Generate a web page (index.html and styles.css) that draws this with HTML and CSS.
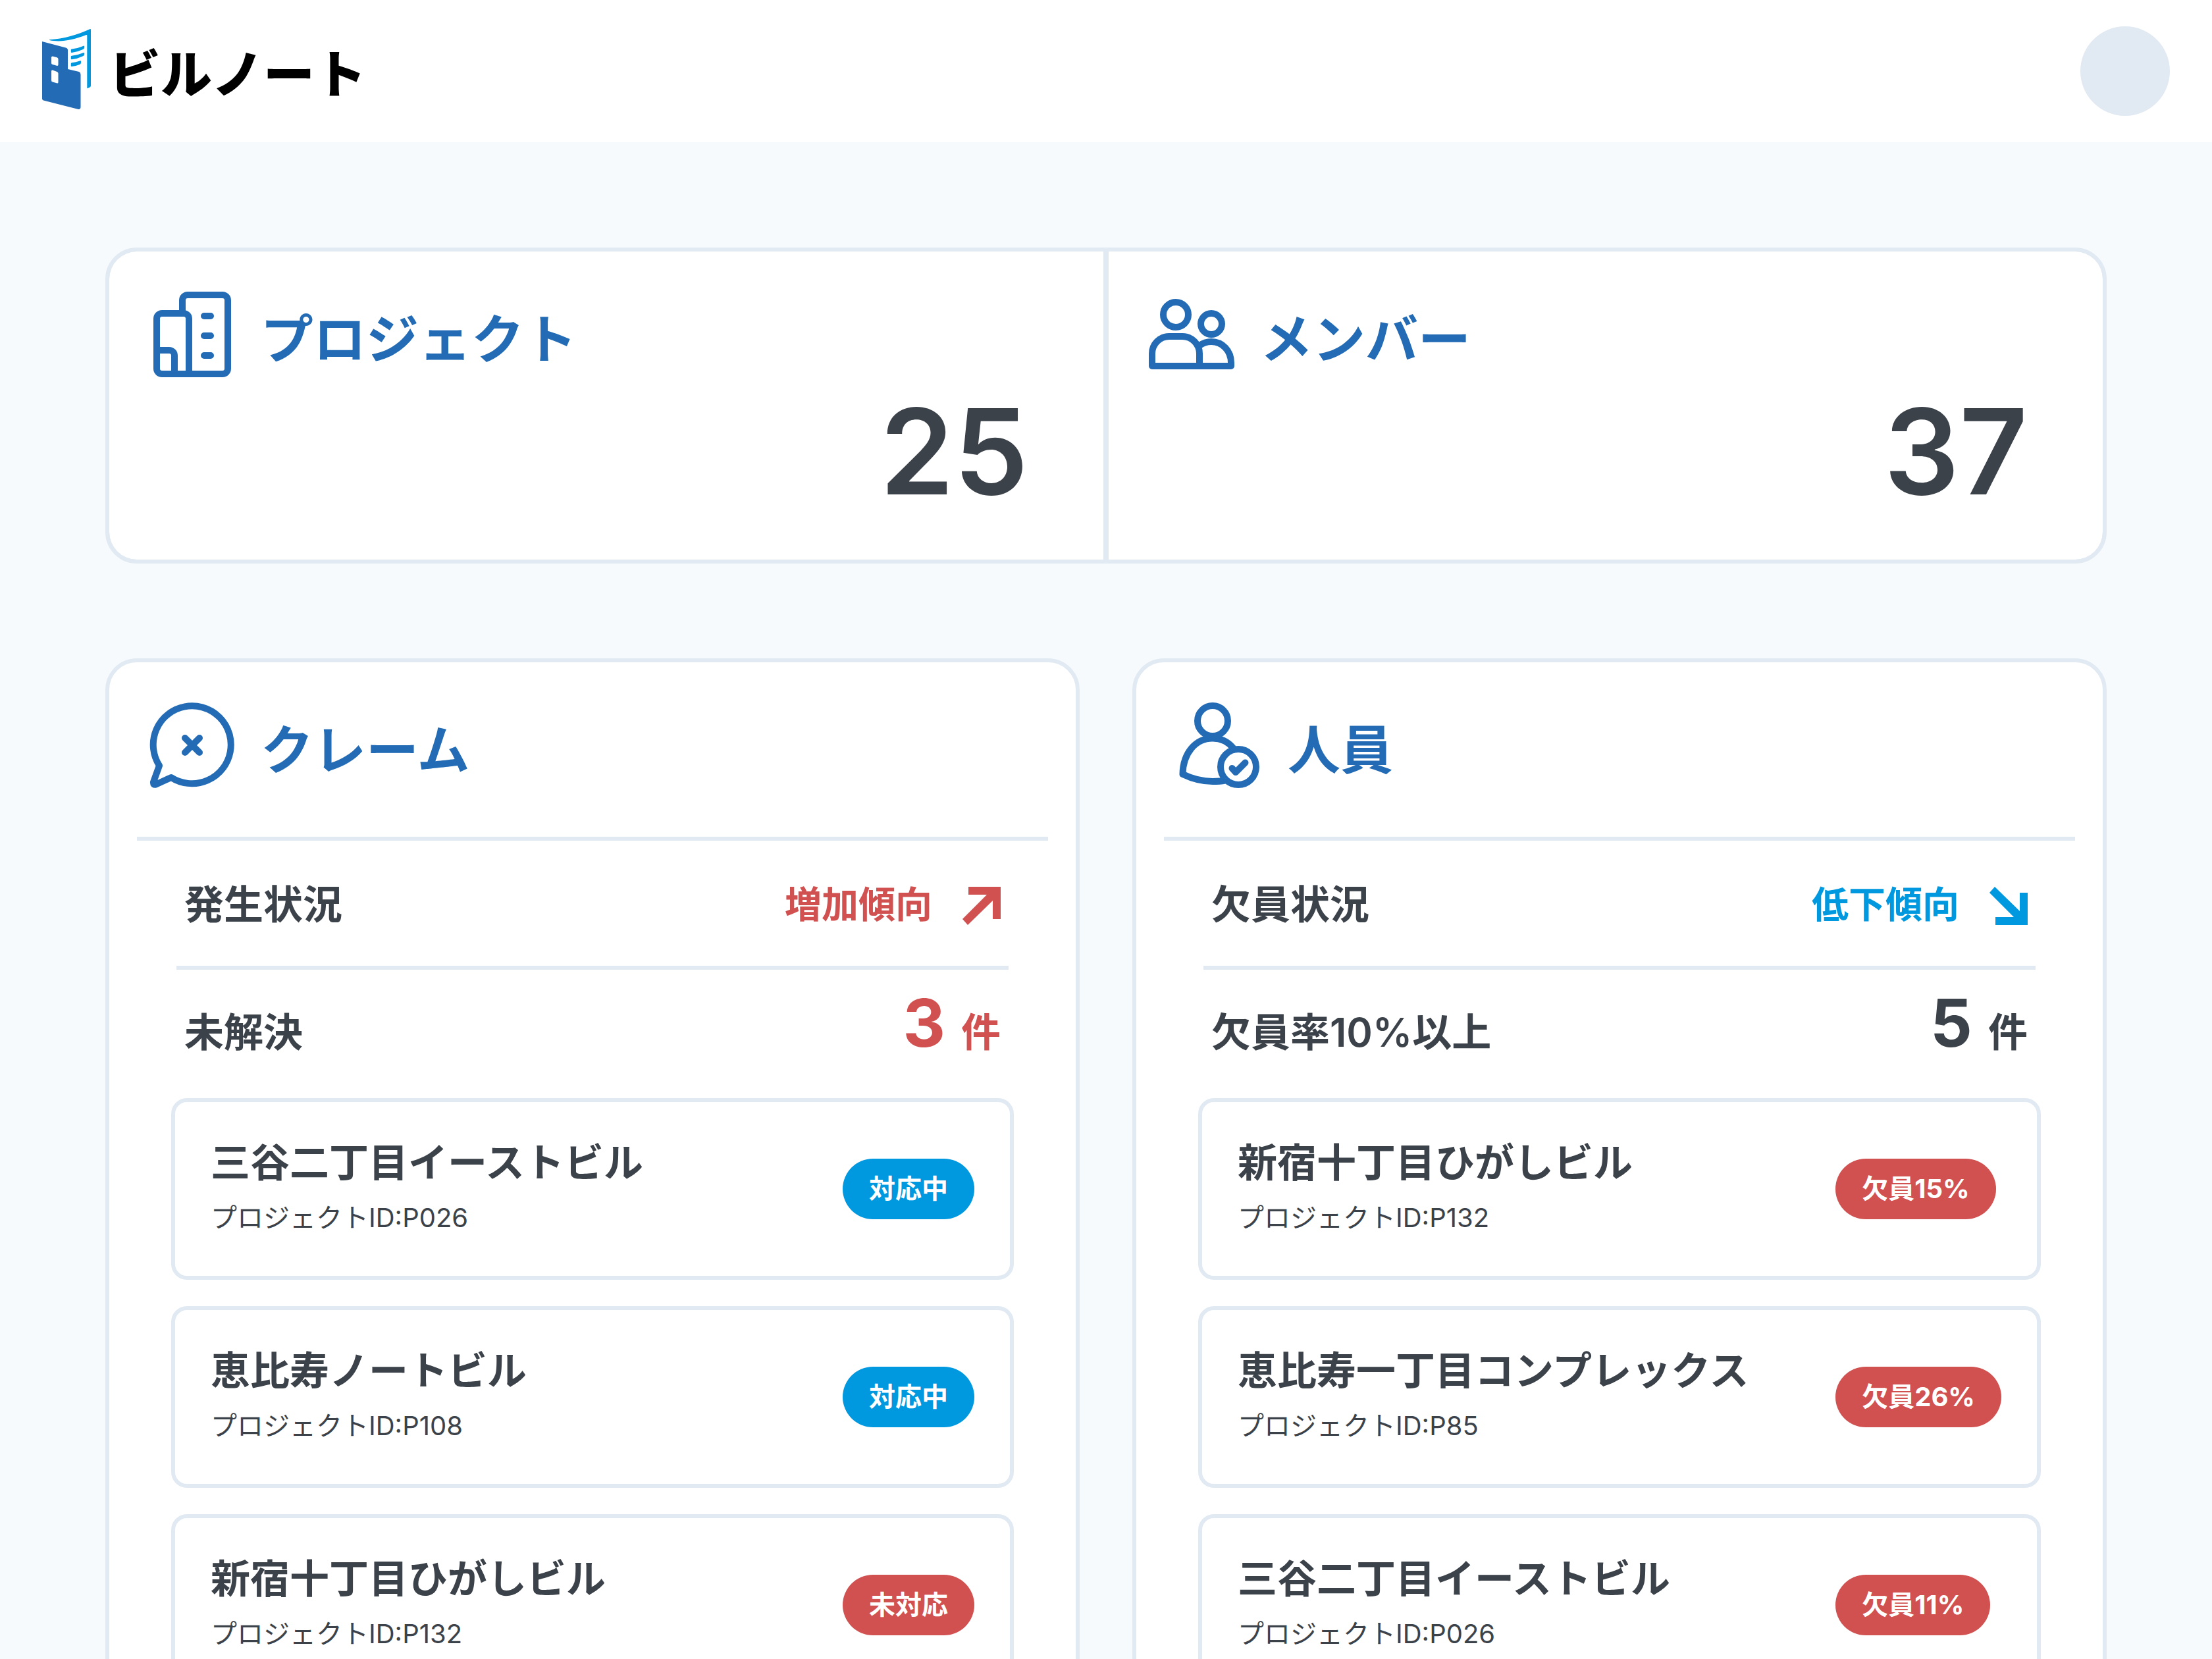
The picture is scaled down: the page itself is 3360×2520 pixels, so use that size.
FILE: index.html
```html
<!DOCTYPE html>
<html lang="ja">
<head>
<meta charset="utf-8">
<meta name="viewport" content="width=device-width, initial-scale=1">
<title>ビルノート</title>
<link rel="stylesheet" href="styles.css">
</head>
<body>
<header class="header">
  <a class="brand" href="#">
    <svg class="brand-mark" viewBox="0 0 74 128" aria-hidden="true">
      <path class="mark-cover" fill-rule="evenodd" d="M0 19 L36 28.500 Q39 29.500 39 32 V61 L56 65 Q58.500 66 58.500 69 V119 Q58 122.500 55 122 L2 108.500 Q0 107.500 0 106 Z M16 41.500 Q14 41.500 14 43 V52 Q14 53.500 16 54 L23 56 Q24.500 56 24.500 54 V46 Q24.500 44 22.500 43.300 Z M16 62.500 Q14 62 14 64 V78 Q14 80 16 80.500 L23 82.500 Q24.500 82.500 24.500 81 V67.500 Q24.500 65.500 22.500 65 Z"/>
      <path class="mark-page" d="M11 16.300 C33 15 53 9 73 0 Q74 0 74 1 V86 Q74 87.500 72.500 88.500 L69 90.300 Q68.300 90.300 68.300 89.500 V10 Q68.300 8.500 67 9 C45 17.500 27 20.500 11 17 Z"/>
      <path class="mark-page" d="M43.800 31.500 Q43.800 30.500 45 30.500 Q54 29.500 63 25.700 Q64.200 25.300 64.200 26.500 V28.500 Q64 30 62 31 Q54 35 45 36 Q43.800 36 43.800 35 Z M43.800 41.800 Q43.800 40.800 45 40.800 Q54 39.800 63 36 Q64.200 35.600 64.200 36.800 V38.800 Q64 40.300 62 41.300 Q54 45.300 45 46.300 Q43.800 46.300 43.800 45.300 Z M43.800 52.500 Q43.800 51.500 45 51.300 Q51 50.700 58 48.300 Q59 48 59 49 V51.500 Q58.800 53 57 54 Q51 56.500 45 57 Q43.800 57 43.800 56 Z"/>
    </svg>
    <span class="brand-name">ビルノート</span>
  </a>
  <button class="avatar" type="button" aria-label="アカウント"></button>
</header>

<main class="main">
  <section class="summary">
    <div class="stat">
      <div class="heading">
        <svg class="icon" viewBox="0 0 144 144" aria-hidden="true">
          <path d="M57 40 V20 a8 8 0 0 1 8-8 H118 a8 8 0 0 1 8 8 V124 a8 8 0 0 1-8 8 H26 a8 8 0 0 1-8-8 V48 a8 8 0 0 1 8-8 H59 a8 8 0 0 1 8 8 V132 M18 96 H37 a8 8 0 0 1 8 8 V132 M90 44 H100 M90 74 H100 M90 104 H100"/>
        </svg>
        <h2>プロジェクト</h2>
      </div>
      <p class="stat-value">25</p>
    </div>
    <div class="stat">
      <div class="heading">
        <svg class="icon" viewBox="0 0 144 144" aria-hidden="true">
          <circle cx="48" cy="42" r="19"/>
          <circle cx="102" cy="56" r="16"/>
          <path d="M12 120 V101 a26 26 0 0 1 26-26 H58 a26 26 0 0 1 26 26 V120 M84 89 Q92 83 102 83 C119 83 132 97 132 115 V120 H12"/>
        </svg>
        <h2>メンバー</h2>
      </div>
      <p class="stat-value">37</p>
    </div>
  </section>

  <div class="panels">
    <section class="panel">
      <div class="heading">
        <svg class="icon" viewBox="0 0 144 144" aria-hidden="true">
          <path d="M40 121 A59 59 0 1 0 22 103 L13 128 Q12.500 133 17 131.500 Z M61 61 L83 83 M83 61 L61 83"/>
        </svg>
        <h2>クレーム</h2>
      </div>
      <div class="panel-body">
        <div class="row row-trend">
          <h3>発生状況</h3>
          <p class="trend trend-up">増加傾向
            <svg class="arrow" viewBox="0 -6 58 74" aria-hidden="true"><path d="M9 9 H58 V58 H46 V30 L8 67 L0 58 L37 21 H9 Z"/></svg>
          </p>
        </div>
        <div class="row row-count">
          <h3>未解決</h3>
          <p class="count count-alert"><span class="count-value">3</span>件</p>
        </div>
        <ul class="list">
          <li class="item">
            <div class="item-text"><h4>三谷二丁目イーストビル</h4><p class="item-id">プロジェクトID:P026</p></div>
            <span class="pill pill-progress">対応中</span>
          </li>
          <li class="item">
            <div class="item-text"><h4>恵比寿ノートビル</h4><p class="item-id">プロジェクトID:P108</p></div>
            <span class="pill pill-progress">対応中</span>
          </li>
          <li class="item">
            <div class="item-text"><h4>新宿十丁目ひがしビル</h4><p class="item-id">プロジェクトID:P132</p></div>
            <span class="pill pill-alert">未対応</span>
          </li>
        </ul>
      </div>
    </section>

    <section class="panel">
      <div class="heading">
        <svg class="icon" viewBox="0 0 144 144" aria-hidden="true">
          <circle cx="62" cy="35" r="23"/>
          <path d="M93 76 C85 66.500 74 61.500 62 61.500 C36 61.500 17 84 16.500 116 C30 122.500 45 127 62 127 C69 127 76 126.500 81 125.500"/>
          <circle cx="101" cy="105" r="27"/>
          <path d="M91.500 107 L97 113 L111.500 98.500"/>
        </svg>
        <h2>人員</h2>
      </div>
      <div class="panel-body">
        <div class="row row-trend">
          <h3>欠員状況</h3>
          <p class="trend trend-down">低下傾向
            <svg class="arrow" viewBox="0 -6 58 74" aria-hidden="true"><path d="M8 9 L46 46 V18 H58 V67 H9 V55 H37 L0 18 Z"/></svg>
          </p>
        </div>
        <div class="row row-count">
          <h3>欠員率10%以上</h3>
          <p class="count"><span class="count-value">5</span>件</p>
        </div>
        <ul class="list">
          <li class="item">
            <div class="item-text"><h4>新宿十丁目ひがしビル</h4><p class="item-id">プロジェクトID:P132</p></div>
            <span class="pill pill-alert">欠員15%</span>
          </li>
          <li class="item">
            <div class="item-text"><h4>恵比寿一丁目コンプレックス</h4><p class="item-id">プロジェクトID:P85</p></div>
            <span class="pill pill-alert">欠員26%</span>
          </li>
          <li class="item">
            <div class="item-text"><h4>三谷二丁目イーストビル</h4><p class="item-id">プロジェクトID:P026</p></div>
            <span class="pill pill-alert">欠員11%</span>
          </li>
        </ul>
      </div>
    </section>
  </div>
</main>
</body>
</html>
```
FILE: styles.css
```css
:root {
  --blue: #236cb5;
  --sky: #0098df;
  --red: #d15050;
  --text: #3c424a;
  --line: #e1eaf2;
  --ground: #f6fafd;
}

* {
  box-sizing: border-box;
  margin: 0;
  padding: 0;
}

body {
  display: flex;
  flex-direction: column;
  height: 100vh;
  background: var(--ground);
  color: var(--text);
  font-family: Inter, "Noto Sans CJK JP", sans-serif;
  font-optical-sizing: none;
  font-size: 60px;
  font-weight: 600;
}

h2, h3, h4 {
  font-size: inherit;
  font-weight: inherit;
}

/* Header */

.header {
  display: flex;
  flex: none;
  align-items: center;
  justify-content: space-between;
  padding: 40px 64px;
  background: #fff;
}

.brand {
  display: flex;
  align-items: center;
  gap: 28px;
  color: #000;
  text-decoration: none;
}

.brand-mark {
  width: 74px;
  height: 128px;
}

.mark-cover {
  fill: var(--blue);
}

.mark-page {
  fill: var(--sky);
}

.brand-name {
  padding-top: 12px;
  font-size: 78px;
  font-weight: 900;
  line-height: 124px;
}

.avatar {
  width: 136px;
  height: 136px;
  border: 0;
  border-radius: 50%;
  background: var(--line);
}

/* Page */

.main {
  display: flex;
  flex: 1;
  flex-direction: column;
  gap: 144px;
  min-height: 0;
  padding: 160px;
  overflow-y: auto;
  scrollbar-width: none;
}

.heading {
  display: flex;
  align-items: flex-start;
  gap: 32px;
  color: var(--blue);
}

.heading h2 {
  font-size: 80px;
  line-height: 158px;
}

.icon {
  flex: none;
  width: 144px;
  height: 144px;
  fill: none;
  stroke: currentColor;
  stroke-width: 10px;
  stroke-linecap: round;
  stroke-linejoin: round;
}

/* Totals */

.summary {
  display: grid;
  flex: none;
  grid-template-columns: 1fr 1fr;
  gap: 8px;
  border: 6px solid var(--line);
  border-radius: 48px;
  background: var(--line);
  overflow: hidden;
}

.stat {
  padding: 54px 54px 72px;
  background: #fff;
}

.stat:first-child {
  border-radius: 42px 0 0 42px;
}

.stat:last-child {
  border-radius: 0 42px 42px 0;
}

.stat-value {
  padding-right: 60px;
  font-size: 180px;
  line-height: 184px;
  text-align: right;
}

/* Panels */

.panels {
  display: grid;
  flex: none;
  grid-template-columns: 1fr 1fr;
  gap: 80px;
}

.panel {
  padding: 0 42px 54px;
  border: 6px solid var(--line);
  border-radius: 48px;
  background: #fff;
}

.panel > .heading {
  padding: 54px 12px 53px;
  border-bottom: 6px solid var(--line);
}

.panel-body {
  padding: 0 52px;
}

.row {
  display: flex;
  justify-content: space-between;
  margin: 0 8px;
  padding: 0 12px;
}

.row-trend {
  align-items: center;
  height: 196px;
  padding-bottom: 6px;
  border-bottom: 6px solid var(--line);
}

.row-count {
  align-items: baseline;
  padding-top: 31px;
  padding-bottom: 50px;
  line-height: 100px;
}

.trend {
  display: flex;
  align-items: center;
  gap: 46px;
  font-size: 56px;
  font-weight: 700;
}

.trend-up {
  color: var(--red);
}

.trend-down {
  color: var(--sky);
}

.arrow {
  width: 58px;
  height: 74px;
  fill: currentColor;
}

.count {
  display: flex;
  align-items: baseline;
  gap: 24px;
}

.count-alert {
  color: var(--red);
}

.count-value {
  font-size: 100px;
  font-weight: 700;
}

/* Project list: all badges of a list share one column */

.list {
  display: grid;
  grid-template-columns: 1fr auto;
  gap: 40px;
  list-style: none;
}

.item {
  display: grid;
  grid-column: 1 / -1;
  grid-template-columns: subgrid;
  align-items: center;
  justify-items: start;
  padding: 46px 54px;
  border: 6px solid var(--line);
  border-radius: 24px;
}

.item-text {
  padding-top: 4px;
}

.item h4 {
  line-height: 84px;
}

.item-id {
  font-size: 40px;
  font-weight: 400;
  line-height: 84px;
}

.pill {
  padding: 0 40px;
  border-radius: 46px;
  color: #fff;
  font-size: 40px;
  font-weight: 700;
  line-height: 92px;
}

.pill-progress {
  background: var(--sky);
}

.pill-alert {
  background: var(--red);
}
```
